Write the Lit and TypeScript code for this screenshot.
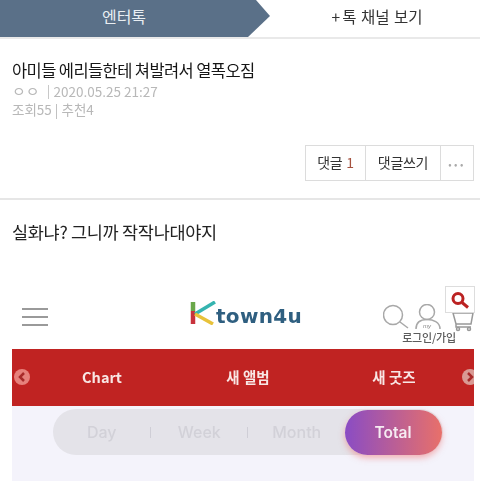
import { LitElement, html, css } from 'lit';
import { customElement } from 'lit/decorators.js';

@customElement('app-root')
export class AppRoot extends LitElement {
  static styles = css`
    :host {
      display: block;
      width: 480px;
      height: 481px;
      overflow: hidden;
      background: #fff;
      font-family: 'Noto Sans CJK KR', 'Noto Sans', sans-serif;
      color: #222;
    }
    .soft {
      filter: blur(0.3px);
    }
    .tabs {
      display: flex;
      height: 37px;
      border-bottom: 2px solid #e9e9e9;
    }
    .tab-on {
      width: 270px;
      height: 37px;
      box-sizing: border-box;
      padding: 0 22px 6px 0;
      display: flex;
      align-items: center;
      justify-content: center;
      background: #5a7088;
      clip-path: polygon(0 0, 256px 0, 270px 16px, 248px 37px, 0 37px);
      color: #e9eef2;
      font-size: 16px;
    }
    .tab-off {
      flex: 1;
      display: flex;
      align-items: center;
      justify-content: center;
      gap: 2px;
      padding: 0 0 6px 4px;
      font-size: 15.5px;
      word-spacing: 1px;
      color: #333;
    }
    .head {
      padding: 19px 12px 0;
    }
    .title {
      font-size: 16.5px;
      line-height: 24px;
      letter-spacing: -0.6px;
      color: #161616;
    }
    .meta {
      font-size: 13.5px;
      line-height: 18px;
      color: #b8b8b8;
    }
    .meta .nick {
      font-size: 15px;
      line-height: 18px;
    }
    .meta .sep {
      display: inline-block;
      width: 1px;
      height: 14px;
      margin: 0 5px 0 8px;
      vertical-align: -2px;
      background: #c8c8c8;
    }
    .buttons {
      display: flex;
      justify-content: flex-end;
      padding: 27px 6px 0 0;
    }
    .btn-group {
      display: flex;
      height: 36px;
      box-sizing: border-box;
      border: 1px solid #dcdcdc;
      background: #fff;
    }
    .btn {
      display: flex;
      align-items: center;
      justify-content: center;
      padding-bottom: 2px;
      box-sizing: border-box;
      font-size: 14px;
      letter-spacing: -0.3px;
      color: #333;
      border-right: 1px solid #dcdcdc;
    }
    .btn:last-child {
      border-right: 0;
    }
    .b1 { width: 60px; }
    .b2 { width: 75px; }
    .b3 { width: 32px; color: #aaa; font-size: 10px; letter-spacing: 2.5px; padding-bottom: 0; }
    .count { color: #a5523f; margin-left: 4px; }
    .rule {
      height: 2px;
      margin-top: 17px;
      background: #e6e6e6;
    }
    .body-text {
      padding: 20px 12px 0;
      font-size: 17.5px;
      line-height: 24px;
      letter-spacing: -0.3px;
      color: #222;
    }
    .shot {
      position: relative;
      margin-top: 36px;
      filter: blur(0.5px);
    }
    .shot-head {
      display: flex;
      align-items: center;
      height: 69px;
      padding: 0 0 0 22px;
      box-sizing: border-box;
    }
    .burger {
      display: flex;
      flex-direction: column;
      gap: 6px;
      width: 26px;
      margin-top: 4px;
    }
    .burger span {
      height: 2px;
      background: #9a9a9a;
    }
    .logo {
      display: flex;
      align-items: flex-end;
      margin: -3px 0 0 142px;
      width: 119px;
    }
    .logo-name {
      font-family: 'DejaVu Sans', sans-serif;
      font-weight: 700;
      font-size: 20px;
      line-height: 18px;
      letter-spacing: 0.3px;
      color: #2f5f80;
      margin-left: -3px;
      white-space: nowrap;
    }
    .tools {
      margin: 18px 0 0 74px;
      display: flex;
      flex-direction: column;
      align-items: center;
    }
    .tools text {
      font-family: 'Liberation Sans', sans-serif;
      font-size: 6px;
      font-style: italic;
      fill: #888;
      stroke: none;
    }
    .login {
      font-size: 11px;
      font-weight: 500;
      line-height: 12px;
      letter-spacing: -0.2px;
      color: #5c5c5c;
      white-space: nowrap;
      margin-top: -1px;
    }
    .search-box {
      position: absolute;
      left: 445px;
      top: 6px;
      width: 30px;
      height: 27px;
      box-sizing: border-box;
      border: 1px solid #ddd;
      background: #fff;
      display: flex;
      align-items: center;
      justify-content: center;
    }
    .band {
      position: relative;
      margin: 0 6px 0 12px;
      height: 57px;
      background: #c02322;
      display: grid;
      grid-template-columns: repeat(3, 146px);
      padding-left: 17px;
      align-items: center;
      color: #f8e6e4;
      font-size: 14.5px;
      font-weight: 700;
      overflow: hidden;
    }
    .band span {
      text-align: center;
      margin-bottom: 2px;
    }
    .arrow {
      position: absolute;
      top: 20px;
      width: 16px;
      height: 16px;
      display: flex;
    }
    .arrow.left { left: 2px; }
    .arrow.right { left: 450px; }
    .panel {
      margin: 0 6px 0 12px;
      height: 80px;
      padding: 3px 0 0 41px;
      box-sizing: border-box;
      background: #f4f3fb;
    }
    .pill {
      display: flex;
      align-items: center;
      width: 390px;
      height: 46px;
      border-radius: 23px;
      background: #e4e3e9;
      font-family: 'Inter', sans-serif;
      font-size: 16px;
      font-weight: 500;
      color: #d2d1d8;
    }
    .pill .opt {
      width: 97.5px;
      box-sizing: border-box;
      text-align: center;
      position: relative;
    }
    .pill .opt.sep::after {
      content: '';
      position: absolute;
      right: 0;
      top: 5px;
      height: 11px;
      width: 1px;
      background: #cfced6;
    }
    .pill .total {
      width: 97px;
      height: 45px;
      margin-left: -1px;
      display: flex;
      align-items: center;
      justify-content: center;
      border-radius: 23px;
      color: #f6ecf2;
      font-size: 15.5px;
      font-weight: 600;
      background: linear-gradient(90deg, #8a4cc4, #e8706a);
      box-shadow: 0 3px 6px rgba(240, 110, 110, 0.5);
    }
  `;

  render() {
    return html`
      <div class="tabs soft">
        <div class="tab-on">엔터톡</div>
        <div class="tab-off"><span>+</span><span>톡 채널 보기</span></div>
      </div>
      <div class="head soft">
        <div class="title">아미들 에리들한테 쳐발려서 열폭오짐</div>
        <div class="meta"><span class="nick">ㅇㅇ</span><span class="sep"></span>2020.05.25 21:27</div>
        <div class="meta">조회55 | 추천4</div>
      </div>
      <div class="buttons soft">
        <div class="btn-group">
          <div class="btn b1">댓글<span class="count">1</span></div>
          <div class="btn b2">댓글쓰기</div>
          <div class="btn b3">•••</div>
        </div>
      </div>
      <div class="rule"></div>
      <div class="body-text soft">실화냐? 그니까 작작나대야지</div>
      <div class="shot">
        <div class="shot-head">
          <div class="burger"><span></span><span></span><span></span></div>
          <div class="logo">
            <svg width="29" height="24" viewBox="0 0 29 24">
              <path d="M3 1V10" stroke="#6aa84a" stroke-width="4.5" fill="none" />
              <path d="M3 10V23" stroke="#c8323c" stroke-width="4.5" fill="none" />
              <path d="M5 13L25 1" stroke="#35b4b0" stroke-width="3.5" fill="none" />
              <path d="M5 13L23 23" stroke="#e8c23a" stroke-width="3.5" fill="none" />
            </svg>
            <span class="logo-name">town4u</span>
          </div>
          <div class="tools">
            <svg width="92" height="28" viewBox="0 0 92 28" fill="none" stroke="#a8a8a8" stroke-width="1.5">
              <circle cx="10" cy="11" r="9.5" />
              <path d="M17 18L25 24" />
              <circle cx="44" cy="8" r="7.5" />
              <path d="M33 25C33 18 38 15.5 44 15.5S57 18 57 25" />
              <text x="40" y="24">my</text>
              <path d="M70 9H90L88 20H73L70 9ZM73 20V23H88" stroke="#999" />
              <circle cx="75" cy="25" r="1.5" stroke="#999" />
              <circle cx="86" cy="25" r="1.5" stroke="#999" />
            </svg>
            <span class="login">로그인/가입</span>
          </div>
        </div>
        <div class="search-box">
          <svg width="20" height="20" viewBox="0 0 20 20" fill="none" stroke="#bb2222" stroke-width="3">
            <circle cx="8" cy="8.5" r="5" />
            <path d="M12 12.5L18 17.5" />
          </svg>
        </div>
        <div class="band">
          <div class="arrow left">
            <svg width="16" height="16" viewBox="0 0 16 16">
              <circle cx="8" cy="8" r="8" fill="#e7817c" />
              <path d="M10 4L6 8L10 12" fill="none" stroke="#a82a2a" stroke-width="2.5" />
            </svg>
          </div>
          <span>Chart</span>
          <span>새 앨범</span>
          <span>새 굿즈</span>
          <div class="arrow right">
            <svg width="16" height="16" viewBox="0 0 16 16">
              <circle cx="8" cy="8" r="8" fill="#d99a94" />
              <path d="M6 4L10 8L6 12" fill="none" stroke="#a82a2a" stroke-width="2.5" />
            </svg>
          </div>
        </div>
        <div class="panel">
          <div class="pill">
            <div class="opt sep">Day</div>
            <div class="opt sep">Week</div>
            <div class="opt">Month</div>
            <div class="total">Total</div>
          </div>
        </div>
      </div>
    `;
  }
}
